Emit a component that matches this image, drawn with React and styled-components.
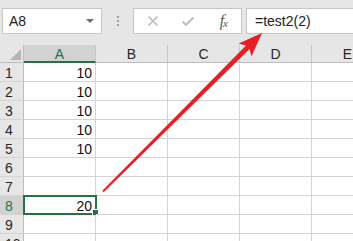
import React from 'react';
import styled, { createGlobalStyle, css } from 'styled-components';

const GlobalStyle = createGlobalStyle`
	body {
		margin: 0;
		background: #fff;
		font-family: "Liberation Sans", Arial, sans-serif;
	}
`;

const GREEN = '#217346';

const Page = styled.div`
	position: relative;
	width: 353px;
	height: 241px;
	overflow: hidden;
	background: #fff;
`;

const FormulaBar = styled.div`
	display: flex;
	align-items: stretch;
	height: 26px;
	padding: 8px 0 11px 2px;
	background: #e6e6e6;
`;

const Box = styled.div`
	display: flex;
	align-items: center;
	box-sizing: border-box;
	background: #fff;
	border: 1px solid #c6c6c6;
	font-size: 14px;
	color: #222;
`;

const NameBox = styled(Box)`
	width: 100px;
	padding: 0 7px 0 6px;
	justify-content: space-between;
`;

const DropArrow = styled.span`
	width: 0;
	height: 0;
	border-left: 4px solid transparent;
	border-right: 4px solid transparent;
	border-top: 4px solid #6d6d6d;
`;

const Grip = styled.div`
	display: flex;
	flex-direction: column;
	justify-content: center;
	gap: 2px;
	margin: 0 14px 0 15px;
	span {
		width: 2px;
		height: 2px;
		background: #9e9e9e;
	}
`;

const Buttons = styled(Box)`
	width: 109px;
	padding-left: 1px;
`;

const IconSlot = styled.div`
	width: 36px;
	display: flex;
	justify-content: center;
	align-items: center;
`;

const Fx = styled.span`
	font-family: "Liberation Serif", "Times New Roman", serif;
	font-style: italic;
	font-size: 16px;
	color: #5a5a5a;
	letter-spacing: -1px;
	sub {
		font-size: 11px;
		vertical-align: baseline;
		position: relative;
		top: 1px;
	}
`;

const FormulaBox = styled(Box)`
	flex: 1;
	margin: 0 -4px 0 4px;
	padding-left: 8px;
`;

const Sheet = styled.div`
	display: grid;
	grid-template-columns: 24px repeat(5, 72px);
	grid-template-rows: 18px;
	grid-auto-rows: 19px;
	font-size: 14px;
`;

const Corner = styled.div`
	position: relative;
	background: #e6e6e6;
	border-right: 1px solid #bdbdbd;
	border-bottom: 1px solid #bdbdbd;
	&::after {
		content: '';
		position: absolute;
		right: 2px;
		bottom: 2px;
		border-left: 11px solid transparent;
		border-bottom: 11px solid #b5b5b5;
	}
`;

const ColHead = styled.div`
	display: flex;
	justify-content: center;
	line-height: 17px;
	padding-top: 1px;
	background: #e6e6e6;
	color: #262626;
	border-right: 1px solid #c8c8c8;
	border-bottom: 1px solid #bdbdbd;
	${p => p.$active && css`
		background: #d2d2d2;
		color: ${GREEN};
		border-bottom: 2px solid ${GREEN};
		line-height: 16px;
	`}
`;

const RowHead = styled.div`
	line-height: 18px;
	padding: 1px 0 0 5px;
	background: #e6e6e6;
	color: #262626;
	border-right: 1px solid #bdbdbd;
	border-bottom: 1px solid #d4d4d4;
	${p => p.$active && css`
		background: #d2d2d2;
		color: ${GREEN};
	`}
`;

const Cell = styled.div`
	position: relative;
	text-align: right;
	line-height: 18px;
	padding: 1px 3px 0 0;
	color: #111;
	border-right: 1px solid #d4d4d4;
	border-bottom: 1px solid #d4d4d4;
`;

const Selection = styled.div`
	position: absolute;
	top: -1px;
	left: -1px;
	right: -2px;
	bottom: -1px;
	border: 2px solid ${GREEN};
	pointer-events: none;
`;

const FillHandle = styled.div`
	position: absolute;
	right: -3px;
	bottom: -2px;
	width: 5px;
	height: 5px;
	background: ${GREEN};
	box-shadow: 0 0 0 1px #fff;
`;

const Overlay = styled.svg`
	position: absolute;
	left: 0;
	top: 0;
	pointer-events: none;
`;

const columns = ['A', 'B', 'C', 'D', 'E'];
const values = ['10', '10', '10', '10', '10', '', '', '20', '', ''];
const activeRow = 8;

const App = () => (
	<Page>
		<GlobalStyle />
		<FormulaBar>
			<NameBox>
				<span>A8</span>
				<DropArrow />
			</NameBox>
			<Grip><span /><span /><span /></Grip>
			<Buttons>
				<IconSlot>
					<svg width="12" height="12" viewBox="0 0 12 12">
						<path d="M1.5 1.5 L10.5 10.5 M10.5 1.5 L1.5 10.5" stroke="#bcbcbc" strokeWidth="1.6" fill="none" />
					</svg>
				</IconSlot>
				<IconSlot>
					<svg width="14" height="11" viewBox="0 0 14 11">
						<path d="M1.5 5.5 L5 9 L12.5 1.5" stroke="#bcbcbc" strokeWidth="1.8" fill="none" />
					</svg>
				</IconSlot>
				<IconSlot>
					<Fx>f<sub>x</sub></Fx>
				</IconSlot>
			</Buttons>
			<FormulaBox>=test2(2)</FormulaBox>
		</FormulaBar>
		<Sheet>
			<Corner />
			{columns.map(c => (
				<ColHead key={c} $active={c === 'A'}>{c}</ColHead>
			))}
			{values.map((v, i) => (
				<React.Fragment key={i}>
					<RowHead $active={i + 1 === activeRow}>{i + 1}</RowHead>
					<Cell>
						{v}
						{i + 1 === activeRow && (
							<Selection>
								<FillHandle />
							</Selection>
						)}
					</Cell>
					{columns.slice(1).map(c => <Cell key={c} />)}
				</React.Fragment>
			))}
		</Sheet>
		<Overlay width="353" height="241" viewBox="0 0 353 241">
			<polygon
				points="102.3,190.8 246,45.4 238.6,43.6 262,33 251.4,56.4 249.6,49 103.7,192.2"
				fill="#ea1d25"
			/>
		</Overlay>
	</Page>
);

export default App;
